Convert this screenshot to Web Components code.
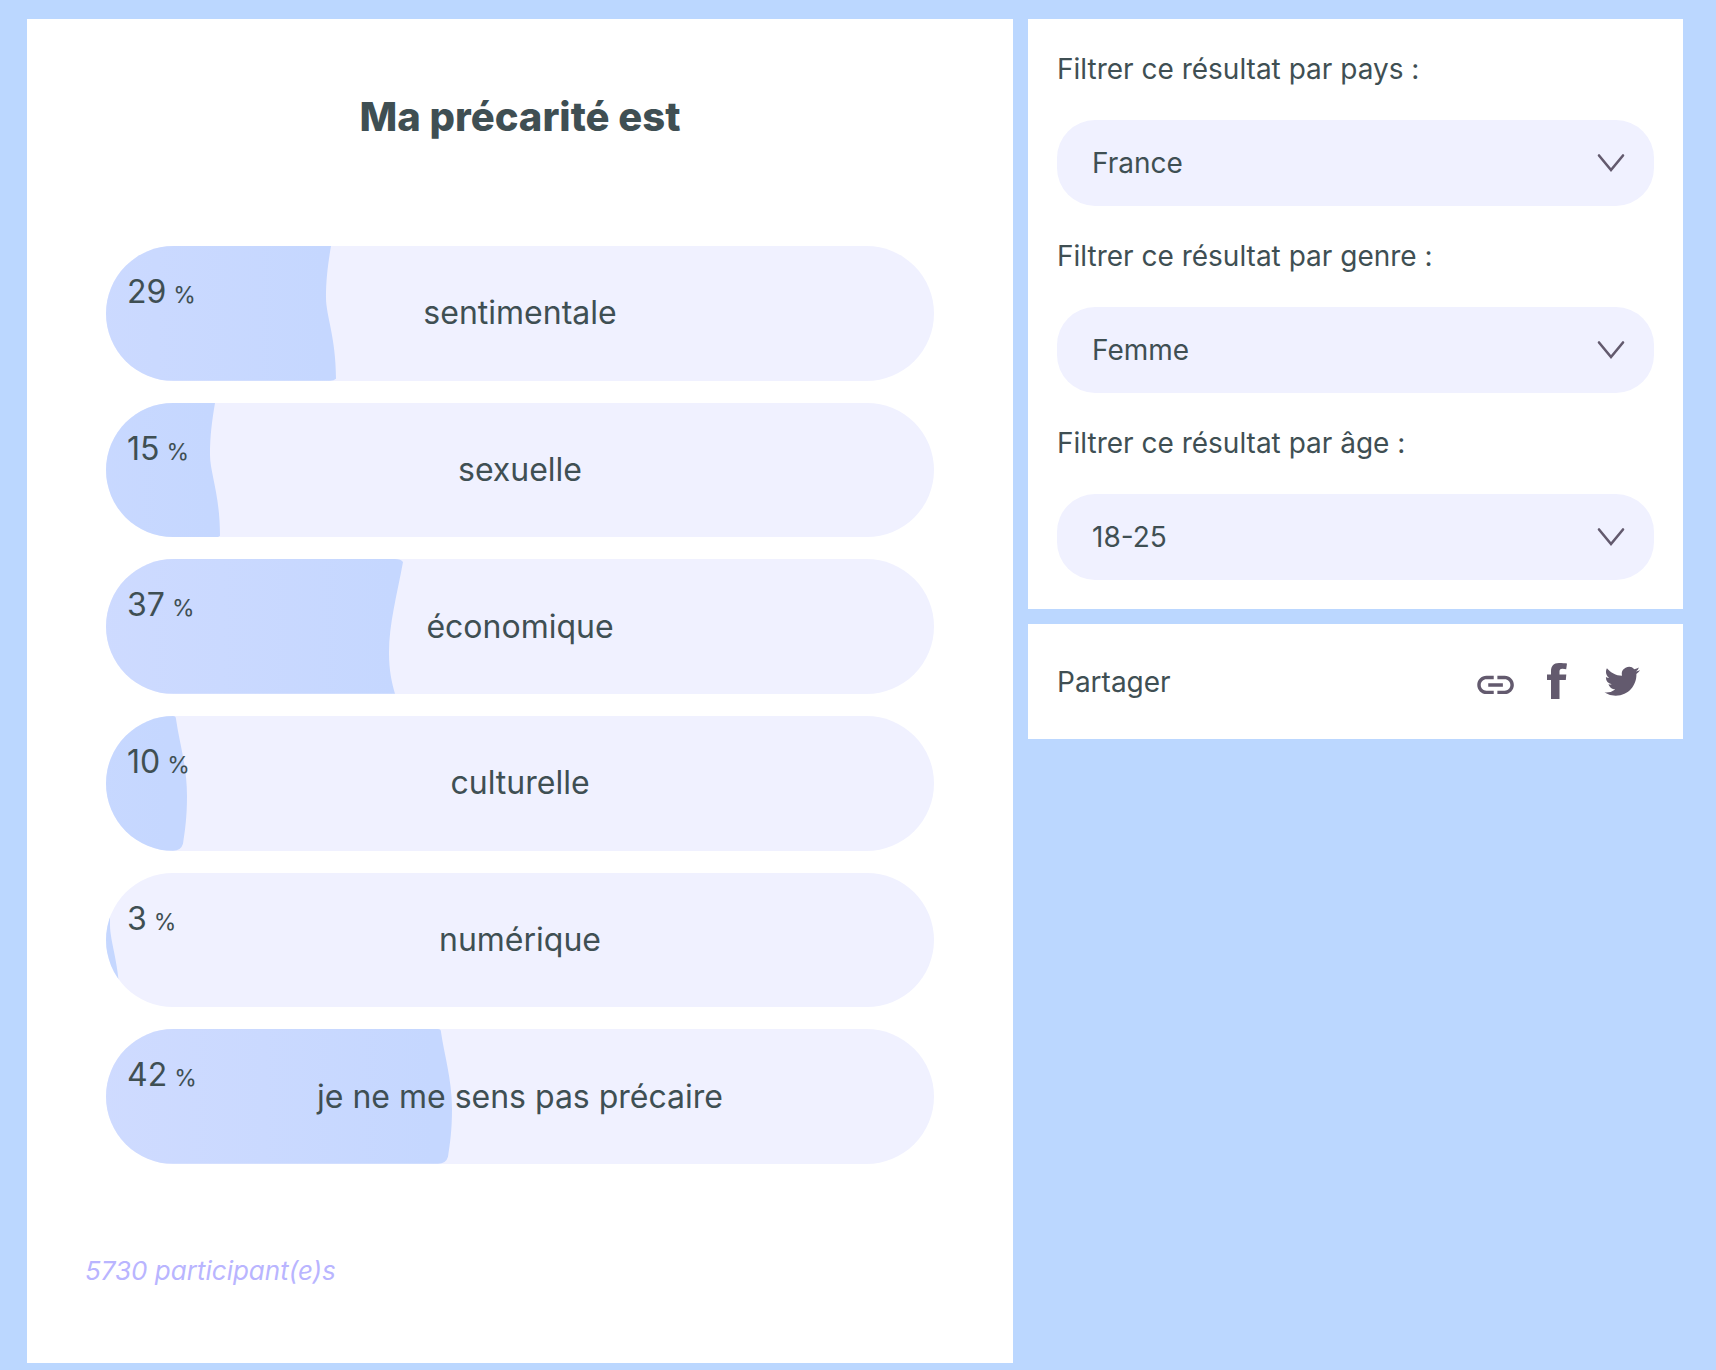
<!DOCTYPE html>
<html lang="fr">
<head>
<meta charset="utf-8">
<meta name="viewport" content="width=device-width, initial-scale=1">
<title>Ma précarité est</title>
<style>
  body {
    margin: 0;
    background: #bbd7ff;
    color: #3f4f53;
    font-family: Inter, "Liberation Sans", sans-serif;
    font-size: 28px;
    line-height: 34px;
  }
</style>
</head>
<body>
<survey-page>
  <result-card heading="Ma précarité est" participants="5730">
    <result-bar value="29" wave="dip">sentimentale</result-bar>
    <result-bar value="15" wave="dip">sexuelle</result-bar>
    <result-bar value="37" wave="lean">économique</result-bar>
    <result-bar value="10" wave="bulge">culturelle</result-bar>
    <result-bar value="3" wave="dip">numérique</result-bar>
    <result-bar value="42" wave="bulge">je ne me sens pas précaire</result-bar>
  </result-card>
  <filter-card slot="side">
    <filter-select label="Filtrer ce résultat par pays :" options="France|Belgique|Suisse"></filter-select>
    <filter-select label="Filtrer ce résultat par genre :" options="Femme|Homme|Autre"></filter-select>
    <filter-select label="Filtrer ce résultat par âge :" options="18-25|26-35|36-50"></filter-select>
  </filter-card>
  <share-card slot="side">Partager</share-card>
</survey-page>

<script>
class SurveyPage extends HTMLElement {
  constructor() {
    super();
    this.attachShadow({ mode: "open" }).innerHTML = `
      <style>
        :host {
          display: grid;
          grid-template-columns: 986fr 655fr;
          gap: 15px;
          align-items: start;
          padding: 19px 33px 7px 27px;
        }
        aside {
          display: grid;
          gap: 15px;
        }
      </style>
      <main><slot></slot></main>
      <aside><slot name="side"></slot></aside>
    `;
  }
}

class ResultCard extends HTMLElement {
  constructor() {
    super();
    this.attachShadow({ mode: "open" });
  }

  connectedCallback() {
    this.shadowRoot.innerHTML = `
      <style>
        :host {
          display: block;
          padding: 74px 58px 76px;
          background: #fff;
        }
        h1 {
          margin: 0 0 105px;
          font-size: 40px;
          line-height: 48px;
          font-weight: 800;
          text-align: center;
        }
        .bars {
          display: grid;
          grid-auto-rows: 1fr;
          gap: 22px;
          min-height: 918px;
          margin: 0 21px;
        }
        p {
          margin: 91px 0 0;
          color: #b9b5ff;
          font-size: 26px;
          line-height: 32px;
          font-style: italic;
        }
      </style>
      <h1>${this.getAttribute("heading")}</h1>
      <div class="bars"><slot></slot></div>
      <p>${this.getAttribute("participants")} participant(e)s</p>
    `;
  }
}

// Right edge of the filled part, x being where the value falls on the track
const waves = {
  dip: (x) => `M0 0H${x - 15}C${x - 18} 18 ${x - 20} 33 ${x - 20} 52C${x - 20} 70 ${x - 10} 92 ${x - 10} 133Q${x - 12} 135 ${x - 16} 135H0Z`,
  lean: (x) => `M0 0H${x - 17}Q${x - 11} 0 ${x - 9} 3C${x - 15} 36 ${x - 23} 65 ${x - 23} 94C${x - 23} 112 ${x - 20} 125 ${x - 17} 135H0Z`,
  bulge: (x) => `M0 0H${x - 15}Q${x - 12} 0 ${x - 12} 3C${x - 9} 25 ${x - 1} 50 ${x - 1} 80C${x - 1} 102 ${x - 3} 115 ${x - 5} 128Q${x - 7} 135 ${x - 15} 135H0Z`,
};

class ResultBar extends HTMLElement {
  constructor() {
    super();
    this.attachShadow({ mode: "open" });
  }

  connectedCallback() {
    const value = Number(this.getAttribute("value"));
    const x = Math.floor(value * 8.28);
    this.shadowRoot.innerHTML = `
      <style>
        :host {
          display: grid;
          overflow: hidden;
          border-radius: 68px;
          background: #f0f1ff;
          font-size: 32px;
          line-height: 39px;
        }
        svg, .value, .label {
          grid-area: 1 / 1;
        }
        svg {
          width: 100%;
          height: 100%;
          min-height: 0;
          contain: size;
        }
        .value {
          display: flex;
          align-self: start;
          align-items: baseline;
          gap: 7px;
          padding: 26px 21px;
        }
        small {
          font-size: 23px;
        }
        .label {
          place-self: center;
          padding-bottom: 1px;
        }
      </style>
      <svg viewBox="0 0 828 135" preserveAspectRatio="none" aria-hidden="true">
        <defs>
          <linearGradient id="fill" gradientUnits="userSpaceOnUse" x1="${x - 360}" y1="0" x2="${x - 20}" y2="0">
            <stop offset="0" stop-color="#cfdbff"/>
            <stop offset="1" stop-color="#c5d7ff"/>
          </linearGradient>
        </defs>
        <path fill="url(#fill)" d="${waves[this.getAttribute("wave")](x)}"/>
      </svg>
      <div class="value"><span>${value}</span><small>%</small></div>
      <div class="label"><slot></slot></div>
    `;
  }
}

class FilterCard extends HTMLElement {
  constructor() {
    super();
    this.attachShadow({ mode: "open" }).innerHTML = `
      <style>
        :host {
          display: block;
          padding: 0 29px 29px;
          background: #fff;
        }
      </style>
      <slot></slot>
    `;
  }
}

class FilterSelect extends HTMLElement {
  constructor() {
    super();
    this.attachShadow({ mode: "open" });
  }

  connectedCallback() {
    const options = this.getAttribute("options").split("|");
    this.shadowRoot.innerHTML = `
      <style>
        :host {
          display: block;
          padding-top: 33px;
        }
        label {
          display: block;
          margin-bottom: 34px;
        }
        .field {
          display: grid;
          align-items: center;
        }
        select, svg {
          grid-area: 1 / 1;
        }
        select {
          appearance: none;
          width: 100%;
          margin: 0;
          padding: 26px 80px 26px 35px;
          border: 0;
          border-radius: 38px;
          background: #f0f1ff;
          color: inherit;
          font: inherit;
          cursor: pointer;
        }
        svg {
          justify-self: end;
          width: 28px;
          height: 20px;
          margin-right: 29px;
          pointer-events: none;
        }
      </style>
      <label for="choice">${this.getAttribute("label")}</label>
      <div class="field">
        <select id="choice">
          ${options.map((option) => `<option>${option}</option>`).join("")}
        </select>
        <svg viewBox="0 0 28 20" fill="none" stroke="#635a6e" stroke-width="2.6" stroke-linecap="round" aria-hidden="true">
          <path d="M2 2.500L14 17L26 2.500"/>
        </svg>
      </div>
    `;
  }
}

class ShareCard extends HTMLElement {
  constructor() {
    super();
    this.attachShadow({ mode: "open" }).innerHTML = `
      <style>
        :host {
          display: flex;
          align-items: center;
          justify-content: space-between;
          padding: 38px 40px 37px 29px;
          background: #fff;
        }
        nav {
          display: flex;
          gap: 23px;
        }
        button, a {
          display: block;
          padding: 0;
          border: 0;
          background: none;
          color: #635a6e;
          cursor: pointer;
        }
        svg {
          display: block;
          width: 40px;
          height: 40px;
          fill: currentColor;
        }
      </style>
      <span><slot></slot></span>
      <nav aria-label="Partager">
        <button type="button" aria-label="Copier le lien">
          <svg viewBox="0 0 40 40">
            <path transform="translate(-3.4 1) scale(1.83)" d="M3.9 12c0-1.71 1.39-3.1 3.1-3.1h4V7H7c-2.76 0-5 2.24-5 5s2.24 5 5 5h4v-1.9H7c-1.71 0-3.1-1.39-3.1-3.1zM8 13h8v-2H8v2zm9-6h-4v1.9h4c1.71 0 3.1 1.39 3.1 3.1s-1.39 3.1-3.1 3.1h-4V17h4c2.76 0 5-2.24 5-5s-2.24-5-5-5z"/>
          </svg>
        </button>
        <a href="#facebook" aria-label="Facebook">
          <svg viewBox="0 0 40 40">
            <path d="M11 37V18H7V12.500H11V9.500C11 4 13.500 1 19 1C22 1 25 1.200 27 1.500L26.200 7.200C25 6.900 23.800 6.700 22.500 6.700C20 6.700 19.500 7.800 19.500 9.500V12.500H26.300L25.800 18H19.500V37Z"/>
          </svg>
        </a>
        <a href="#twitter" aria-label="Twitter">
          <svg viewBox="0 0 40 40">
            <path transform="translate(1.500 1.500) scale(1.48)" d="M23.953 4.570a10 10 0 01-2.825.775 4.958 4.958 0 002.163-2.723c-.951.555-2.005.959-3.127 1.184a4.920 4.920 0 00-8.384 4.482C7.690 8.095 4.067 6.130 1.640 3.162a4.822 4.822 0 00-.666 2.475c0 1.710.870 3.213 2.188 4.096a4.904 4.904 0 01-2.228-.616v.060a4.923 4.923 0 003.946 4.827 4.996 4.996 0 01-2.212.085 4.936 4.936 0 004.604 3.417 9.867 9.867 0 01-6.102 2.105c-.390 0-.779-.023-1.170-.067a13.995 13.995 0 007.557 2.209c9.053 0 13.998-7.496 13.998-13.985 0-.210 0-.420-.015-.630A9.935 9.935 0 0024 4.590z"/>
          </svg>
        </a>
      </nav>
    `;
  }
}

customElements.define("survey-page", SurveyPage);
customElements.define("result-card", ResultCard);
customElements.define("result-bar", ResultBar);
customElements.define("filter-card", FilterCard);
customElements.define("filter-select", FilterSelect);
customElements.define("share-card", ShareCard);
</script>
</body>
</html>
